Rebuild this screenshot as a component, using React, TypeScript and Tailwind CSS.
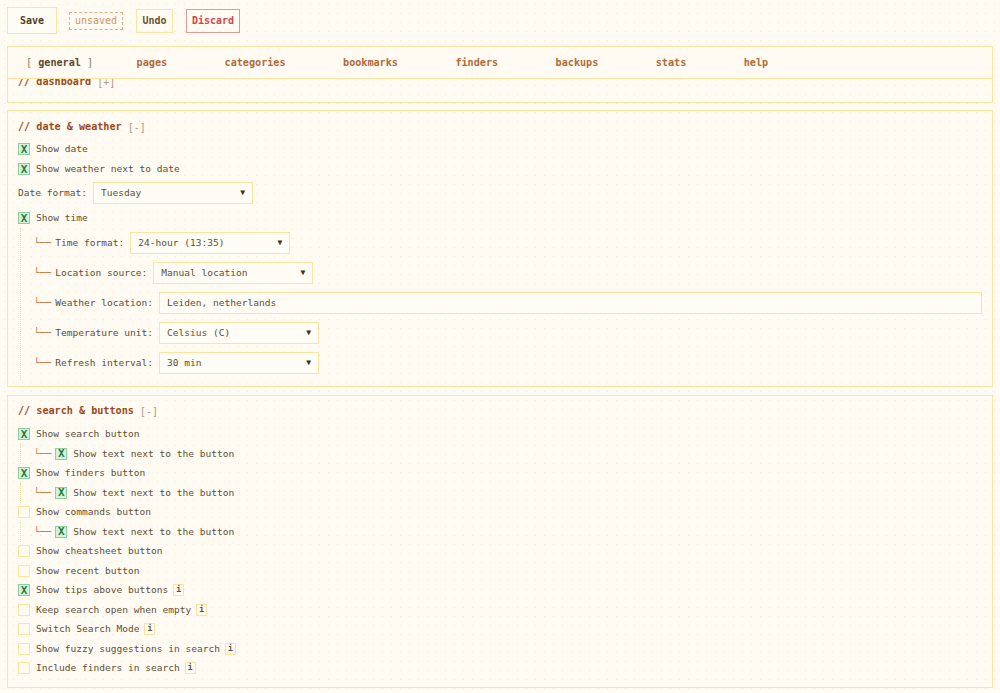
import React from "react"

const mono = "font-['DejaVu_Sans_Mono','Liberation_Mono',monospace]"

const tabs = ["pages", "categories", "bookmarks", "finders", "backups", "stats", "help"]

function Check({ on }: { on: boolean }) {
    if (on) {
        return (
            <span className="w-[12px] h-[12px] shrink-0 border border-[#8fcf9f] bg-[#d8f1dc] flex items-center justify-center text-[#1e7b3c] text-[11px] font-bold leading-none">
                X
            </span>
        )
    }
    return <span className="w-[12px] h-[12px] shrink-0 border border-[#fde3a0] bg-[#fffbf0]" />
}

function Info() {
    return (
        <span className="ml-[5px] w-[11px] h-[12px] border border-[#fde3a0] flex items-center justify-center text-[8px] font-bold text-[#5e5037] leading-none">
            i
        </span>
    )
}

function Branch() {
    return <span className="text-[#c0703a] mr-[4px]">└──</span>
}

function Row({ on, label, info, h = "h-[19.5px]" }: { on: boolean; label: string; info?: boolean; h?: string }) {
    return (
        <div className={`${h} flex items-center`}>
            <Check on={on} />
            <span className="ml-[6px]">{label}</span>
            {info && <Info />}
        </div>
    )
}

function SubRow({ on, label }: { on: boolean; label: string }) {
    return (
        <div className="h-[19.5px] ml-[2px] border-l border-dotted border-[#fcd98a] pl-[13px] flex items-center">
            <Branch />
            <Check on={on} />
            <span className="ml-[6px]">{label}</span>
        </div>
    )
}

function Select({ value, w }: { value: string; w: string }) {
    return (
        <div className={`${w} h-[22px] border border-[#fde3a0] bg-[#fffcf5] flex items-center justify-between pl-[7px] pr-[7px]`}>
            <span>{value}</span>
            <span className="text-[8px] text-[#3d3020]">▼</span>
        </div>
    )
}

function Header({ title, sign }: { title: string; sign: string }) {
    return (
        <div className="h-[14px] flex items-center">
            <span className="text-[10.15px] font-bold text-[#9a4a1c]">// {title}</span>
            <span className="ml-[6px] text-[10px] text-[#a89a88]">[{sign}]</span>
        </div>
    )
}

export default function App() {
    return (
        <div className={`${mono} min-h-[693px] bg-[#fffbf3] bg-[radial-gradient(#f3e9cf_0.8px,transparent_0.8px)] bg-[size:9px_9px] text-[9.55px] text-[#5e5037] px-[7px] pt-[7px] pb-[4px]`}>
            <div className="flex items-center">
                <button className="w-[50px] h-[27px] border border-[#fde3a0] bg-[#fffcf5] text-[10px] font-bold text-[#4e4028]">
                    Save
                </button>
                <span className="ml-[12px] w-[54px] h-[18px] border border-dashed border-[#e5ae88] flex items-center justify-center text-[10px] text-[#d3936a]">
                    unsaved
                </span>
                <button className="ml-[13px] w-[37px] h-[24px] border border-[#fde3a0] text-[10px] font-bold text-[#6b5530]">
                    Undo
                </button>
                <button className="ml-[13px] w-[54px] h-[24px] border border-[#e59a9a] text-[10px] font-bold text-[#d0474a]">
                    Discard
                </button>
            </div>

            <div className="mt-[12px] h-[33px] border border-[#fde3a0] bg-[#fffbf3] flex items-center pl-[18px] gap-[57.5px] text-[10.15px] font-bold">
                <span className="-mr-[14px] text-[#5e4a2e]">
                    <span className="font-normal text-[#8a7a60]">[</span> general <span className="font-normal text-[#8a7a60]">]</span>
                </span>
                {tabs.map((t) => (
                    <span key={t} className="text-[#b06a3a]">
                        {t}
                    </span>
                ))}
            </div>

            <div className="h-[24px] border-x border-b border-[#fde3a0] overflow-hidden pl-[10px]">
                <div className="-mt-[4px]">
                    <Header title="dashboard" sign="+" />
                </div>
            </div>

            <div className="mt-[7px] border border-[#fde3a0] px-[10px] pt-[9px] pb-[6px]">
                <Header title="date & weather" sign="-" />
                <div className="mt-[5px]">
                    <Row on label="Show date" h="h-[20px]" />
                    <Row on label="Show weather next to date" h="h-[20px]" />
                </div>
                <div className="mt-[3px] flex items-center">
                    <span>Date format:</span>
                    <div className="ml-[6px]">
                        <Select value="Tuesday" w="w-[160px]" />
                    </div>
                </div>
                <div className="mt-[4px]">
                    <Row on label="Show time" h="h-[20px]" />
                </div>
                <div className="ml-[2px] border-l border-dotted border-[#fcd98a] pl-[13px] pt-[4px] pb-[6px] flex flex-col gap-[8px]">
                    <div className="flex items-center">
                        <Branch />
                        <span>Time format:</span>
                        <div className="ml-[6px]">
                            <Select value="24-hour (13:35)" w="w-[160px]" />
                        </div>
                    </div>
                    <div className="flex items-center">
                        <Branch />
                        <span>Location source:</span>
                        <div className="ml-[6px]">
                            <Select value="Manual location" w="w-[160px]" />
                        </div>
                    </div>
                    <div className="flex items-center">
                        <Branch />
                        <span>Weather location:</span>
                        <div className="ml-[6px] flex-1 h-[22px] border border-[#fde3a0] bg-[#fffcf5] flex items-center pl-[7px]">
                            Leiden, netherlands
                        </div>
                    </div>
                    <div className="flex items-center">
                        <Branch />
                        <span>Temperature unit:</span>
                        <div className="ml-[6px]">
                            <Select value="Celsius (C)" w="w-[160px]" />
                        </div>
                    </div>
                    <div className="flex items-center">
                        <Branch />
                        <span>Refresh interval:</span>
                        <div className="ml-[6px]">
                            <Select value="30 min" w="w-[160px]" />
                        </div>
                    </div>
                </div>
            </div>

            <div className="mt-[8px] border border-[#fde3a0] px-[10px] pt-[8px] pb-[9px]">
                <Header title="search & buttons" sign="-" />
                <div className="mt-[6.5px]">
                    <Row on label="Show search button" />
                    <SubRow on label="Show text next to the button" />
                    <Row on label="Show finders button" />
                    <SubRow on label="Show text next to the button" />
                    <Row on={false} label="Show commands button" />
                    <SubRow on label="Show text next to the button" />
                    <Row on={false} label="Show cheatsheet button" />
                    <Row on={false} label="Show recent button" />
                    <Row on label="Show tips above buttons" info />
                    <Row on={false} label="Keep search open when empty" info />
                    <Row on={false} label="Switch Search Mode" info />
                    <Row on={false} label="Show fuzzy suggestions in search" info />
                    <Row on={false} label="Include finders in search" info />
                </div>
            </div>
        </div>
    )
}
